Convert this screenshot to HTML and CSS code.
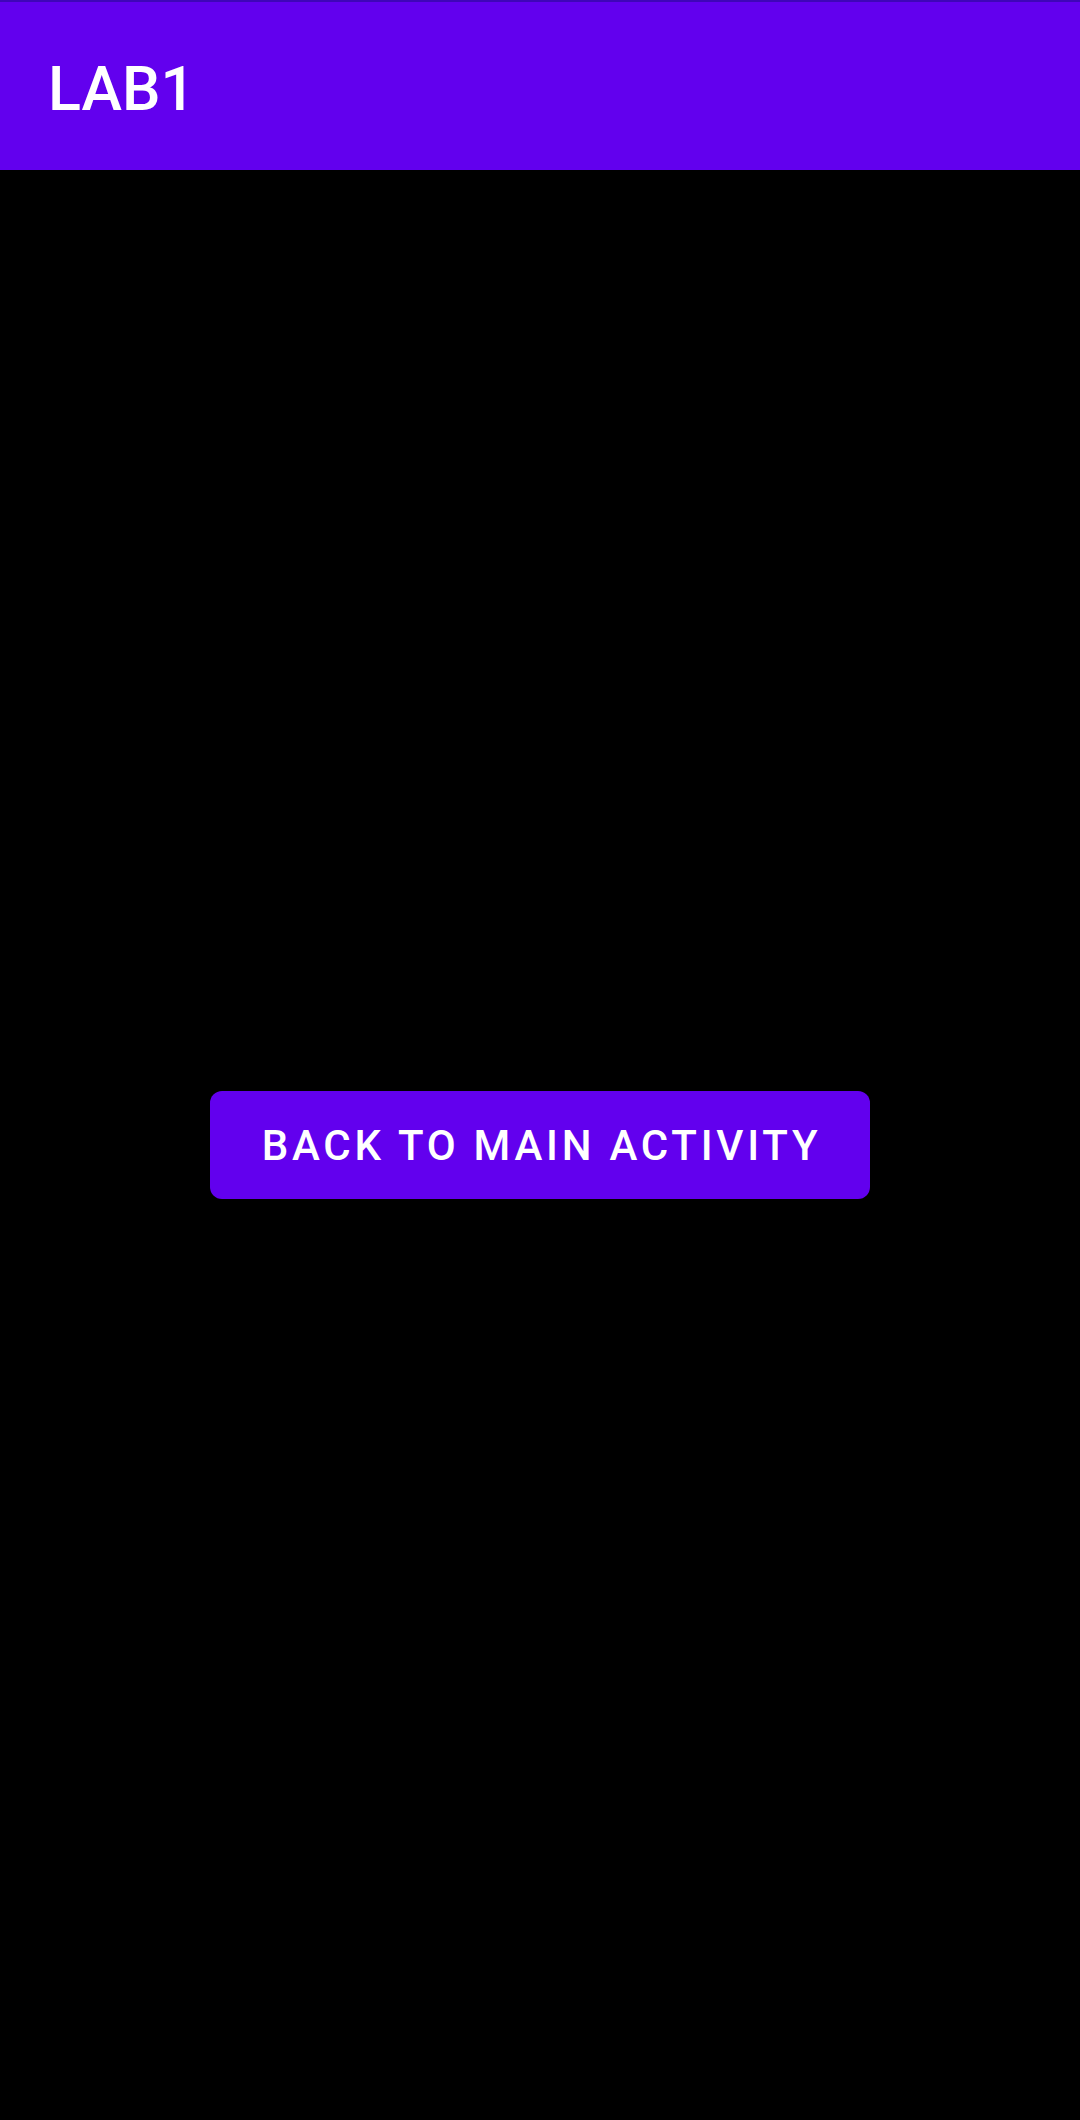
FILE: index.html
```html
<!DOCTYPE html>
<html>
<head>
<meta charset="utf-8">
<link rel="stylesheet" href="styles.css">
</head>
<body>
<div class="app">
  <header class="toolbar">
    <h1 class="title">LAB1</h1>
  </header>
  <main class="content">
    <button class="btn">BACK TO MAIN ACTIVITY</button>
  </main>
</div>
</body>
</html>
```
FILE: styles.css
```css
html, body {
  margin: 0;
  padding: 0;
  background: #000;
}
.app {
  width: 1080px;
  height: 2120px;
  display: flex;
  flex-direction: column;
  font-family: Roboto, "Noto Sans", sans-serif;
}
.toolbar {
  box-sizing: border-box;
  height: 170px;
  border-top: 2px solid #3f05b8;
  background: #6200ee;
  display: flex;
  align-items: center;
  padding-left: 48px;
}
.title {
  margin: 0;
  color: #fff;
  font-size: 61px;
  font-weight: 500;
  line-height: 1;
  padding-top: 6px;
}
.content {
  flex: 1;
  display: flex;
  align-items: center;
  justify-content: center;
}
.btn {
  height: 108px;
  padding: 0 49px 0 52px;
  border: 0;
  border-radius: 12px;
  background: #6200ee;
  color: #fff;
  font-family: Roboto, "Noto Sans", sans-serif;
  font-size: 42px;
  font-weight: 500;
  letter-spacing: 3.75px;
}
```
